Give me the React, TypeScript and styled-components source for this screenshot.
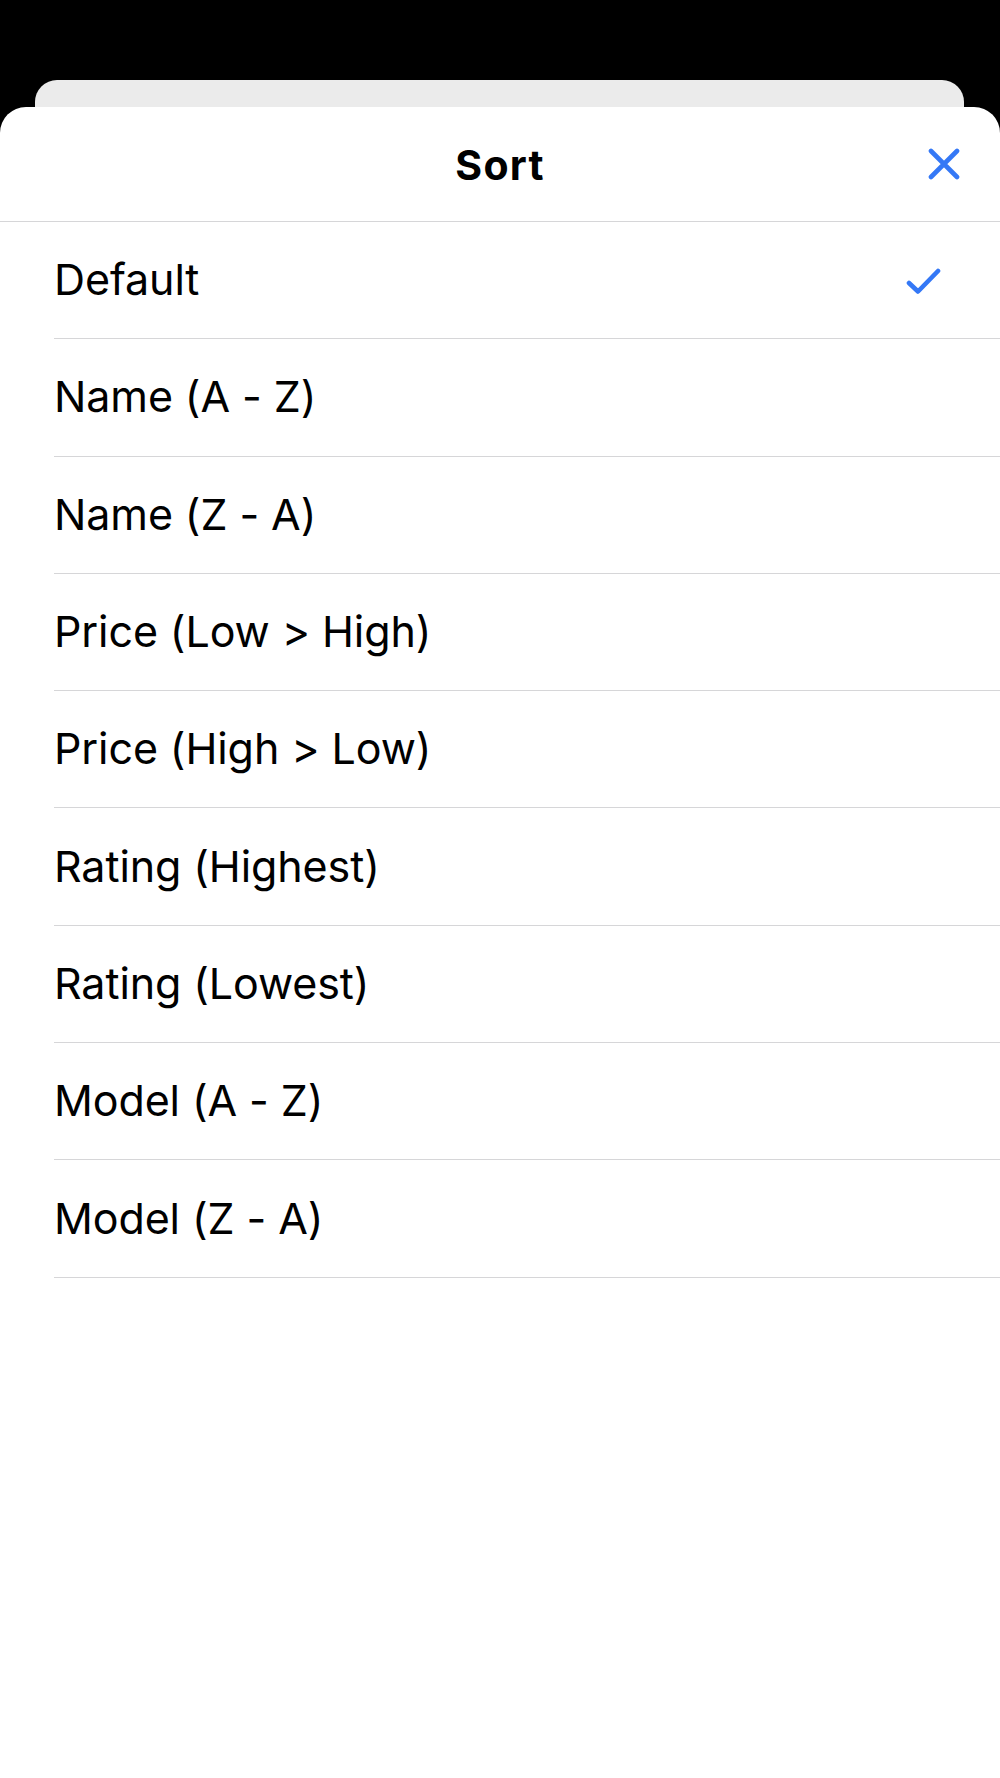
import React from "react";
import styled, { createGlobalStyle } from "styled-components";

const Global = createGlobalStyle`
  html, body { margin: 0; padding: 0; background: #000; }
  body { font-family: Inter, "Liberation Sans", sans-serif; -webkit-font-smoothing: antialiased; }
  * { box-sizing: border-box; }
`;

const Screen = styled.div`
  width: 1000px;
  height: 1778px;
  background: #000;
  padding-top: 80px;
  display: flex;
  flex-direction: column;
  overflow: hidden;
`;

const BackCard = styled.div`
  margin: 0 36px 0 35px;
  height: 27px;
  background: #ebebeb;
  border-radius: 22px 22px 0 0;
`;

const Sheet = styled.div`
  flex: 1;
  background: #fff;
  border-radius: 26px 26px 0 0;
  display: flex;
  flex-direction: column;
`;

const Header = styled.div`
  height: 115px;
  padding-top: 2px;
  border-bottom: 1.5px solid #d6d6d8;
  display: flex;
  align-items: center;
  justify-content: center;
  position: relative;
`;

const Title = styled.h1`
  margin: 0;
  font-size: 41px;
  font-weight: 700;
  color: #000;
  letter-spacing: 1.2px;
`;

const CloseButton = styled.button`
  position: absolute;
  right: 36px;
  top: 50%;
  transform: translateY(-50%);
  width: 40px;
  height: 40px;
  padding: 0;
  border: none;
  background: transparent;
  display: flex;
  align-items: center;
  justify-content: center;
  cursor: pointer;
`;

const List = styled.ul`
  list-style: none;
  margin: 0;
  padding: 0;
`;

const Row = styled.li`
  height: 117.3px;
  margin-left: 54px;
  padding-right: 58px;
  border-bottom: 1.5px solid #d6d6d8;
  display: flex;
  align-items: center;
  justify-content: space-between;
`;

const Label = styled.span`
  font-size: 43px;
  font-weight: 400;
  color: #000;
  letter-spacing: -0.1px;
  margin-top: -2px;
`;

const CheckWrap = styled.span`
  display: flex;
  margin-top: 4px;
`;

const BLUE = "#3478f6";

const XIcon = () => (
  <svg width="32" height="32" viewBox="0 0 32 32">
    <path d="M3 3 L29 29 M29 3 L3 29" stroke={BLUE} strokeWidth="4.6" strokeLinecap="round" fill="none" />
  </svg>
);

const CheckIcon = () => (
  <svg width="36" height="30" viewBox="0 0 36 30">
    <path d="M3 16 L12 24.5 L32 4" stroke={BLUE} strokeWidth="4.6" strokeLinecap="round" strokeLinejoin="round" fill="none" />
  </svg>
);

const options = [
  "Default",
  "Name (A - Z)",
  "Name (Z - A)",
  "Price (Low > High)",
  "Price (High > Low)",
  "Rating (Highest)",
  "Rating (Lowest)",
  "Model (A - Z)",
  "Model (Z - A)",
];

export default function App() {
  const selected = 0;
  return (
    <>
      <Global />
      <Screen>
        <BackCard />
        <Sheet>
          <Header>
            <Title>Sort</Title>
            <CloseButton aria-label="Close">
              <XIcon />
            </CloseButton>
          </Header>
          <List>
            {options.map((o, i) => (
              <Row key={o}>
                <Label>{o}</Label>
                {i === selected && (
                  <CheckWrap>
                    <CheckIcon />
                  </CheckWrap>
                )}
              </Row>
            ))}
          </List>
        </Sheet>
      </Screen>
    </>
  );
}
